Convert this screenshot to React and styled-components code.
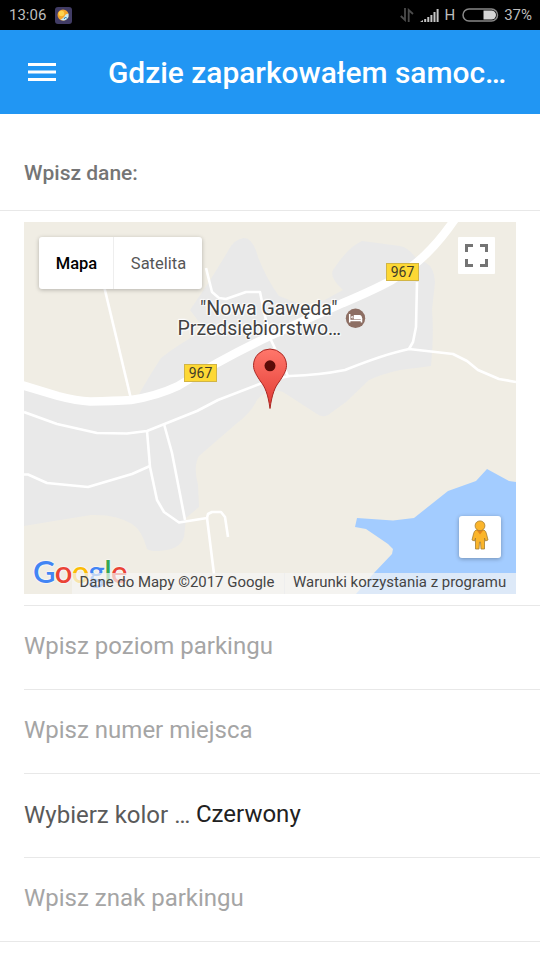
import React from "react";
import styled, { createGlobalStyle } from "styled-components";

const GlobalStyle = createGlobalStyle`
  * { box-sizing: border-box; }
  body { margin: 0; background: #fff; font-family: Roboto, "Noto Sans", sans-serif; }
`;

const Screen = styled.main`
  display: flex;
  flex-direction: column;
  width: 540px;
  height: 960px;
  overflow: hidden;
  background: #fff;
`;

const StatusBar = styled.header`
  display: flex;
  align-items: center;
  justify-content: space-between;
  height: 30px;
  padding: 0 9px;
  background: #000;
  color: #bdbdbd;
  font-size: 15px;
  line-height: 30px;
`;

const StatusGroup = styled.div`
  display: flex;
  align-items: center;
  gap: ${(p) => p.$gap}px;
`;

const SystemIcons = styled(StatusGroup)`
  margin-right: -1px;
`;

const AppBar = styled.nav`
  display: flex;
  align-items: center;
  height: 84px;
  padding-left: 27px;
  background: #2196f3;
`;

const MenuButton = styled.button`
  display: flex;
  width: 81px;
  padding: 0;
  border: 0;
  background: none;
`;

const Title = styled.h1`
  width: 408px;
  margin: 0;
  padding-top: 1px;
  overflow: hidden;
  color: #fff;
  font-size: 29.9px;
  font-weight: 500;
  line-height: 40px;
  white-space: nowrap;
`;

const SectionHeader = styled.h2`
  height: 97px;
  margin: 0;
  padding: 44px 24px 0;
  border-bottom: 1px solid #e8e8e8;
  color: #757575;
  font-size: 21px;
  font-weight: 500;
  line-height: 30px;
`;

const MapFrame = styled.section`
  position: relative;
  flex: none;
  width: 492px;
  height: 372px;
  margin: 11px 24px;
  overflow: hidden;
  background: #f0ede4;
`;

const Canvas = styled.svg`
  display: block;
`;

const MapTypes = styled.div`
  position: absolute;
  left: 15px;
  top: 15px;
  display: flex;
  height: 52px;
  border-radius: 3px;
  background: #fff;
  box-shadow: 0 1px 4px rgba(0, 0, 0, 0.25);
`;

const MapType = styled.button`
  width: ${(p) => p.$width}px;
  padding: 0 0 0 1px;
  border: 0;
  border-left: ${(p) => (p.$active ? "0" : "1px solid #eee")};
  background: none;
  color: ${(p) => (p.$active ? "#000" : "#565656")};
  font: ${(p) => (p.$active ? 500 : 400)} 16.5px Roboto, sans-serif;
`;

const MapButton = styled.button`
  position: absolute;
  left: ${(p) => p.$x}px;
  top: ${(p) => p.$y}px;
  display: grid;
  place-items: center;
  width: ${(p) => p.$size}px;
  height: ${(p) => p.$size}px;
  padding: 0;
  border: 0;
  border-radius: ${(p) => (p.$raised ? 3 : 1)}px;
  background: #fff;
  box-shadow: ${(p) => (p.$raised ? "0 1px 4px rgba(0, 0, 0, 0.3)" : "none")};
`;

const RoadShield = styled.span`
  position: absolute;
  left: ${(p) => p.$x}px;
  top: ${(p) => p.$y}px;
  width: 33px;
  height: 18px;
  border: 1px solid #d2b545;
  background: #fdd835;
  color: #423c28;
  font-size: 14px;
  line-height: 17px;
  text-align: center;
`;

const PlaceLabel = styled.div`
  position: absolute;
  left: 153.5px;
  top: 77px;
  color: #424242;
  font-size: 19.5px;
  line-height: 19.5px;
  white-space: nowrap;
  text-shadow: 0 0 2px #fff, 0 0 2px #fff, 0 0 3px #fff, 1px 1px 1px #fff, -1px -1px 1px #fff;
`;

const LabelLine = styled.div`
  padding-left: ${(p) => p.$inset || 0}px;
`;

const Logo = styled.div`
  position: absolute;
  left: 9px;
  top: 331px;
  font-family: Lato, sans-serif;
  font-size: 31px;
  font-weight: 600;
  letter-spacing: -0.7px;
  line-height: 36px;
  text-shadow: 0 0 2px #fff, 0 0 2px #fff;
`;

const Letter = styled.span`
  color: ${(p) => p.$color};
`;

const Attribution = styled.footer`
  position: absolute;
  right: 0;
  bottom: 0;
  display: flex;
  height: 21px;
  color: #444;
  font-size: 14.95px;
  line-height: 18px;
  white-space: nowrap;
`;

const Credit = styled.span`
  width: ${(p) => p.$width}px;
  padding-left: ${(p) => (p.$divided ? 8 : 7.5)}px;
  background: rgba(245, 245, 245, 0.7);
  border-left: ${(p) => (p.$divided ? "1px solid #eee" : "0")};
`;

const Fields = styled.ul`
  margin: 0 0 0 ${(p) => p.$inset}px;
  padding: 0;
  list-style: none;
  border-top: 1px solid #e8e8e8;
`;

const Field = styled.li`
  display: flex;
  height: 84px;
  padding: 24px 0 0;
  border-bottom: 1px solid #e8e8e8;
  color: ${(p) => (p.$filled ? "#5a5a5a" : "#a5a5a5")};
  font-size: 24px;
  line-height: 32px;
  white-space: nowrap;
`;

const LastField = styled(Field)`
  margin-left: -24px;
  padding-left: 24px;
`;

const Caption = styled.span`
  width: 172px;
  padding-top: 1px;
`;

const Value = styled.span`
  color: #212121;
`;

const minorRoads = [
  "M104 286L131 399",
  "M206 268L212 292L219 298L226 299L246 292L260 292L264 312L271 340L288 376",
  "M516 382L499 379L478 370L467 361L453 354L409 349Q385 354 345 370Q320 375 290 376L270 380L218 400L197 411L147 431L127 433.500L97 433L57 424L24 412",
  "M409 349L413 342L416 327L417 282",
  "M147 431L150 467L157 500L164 512L179 522.500L207 518L208 514L212 512L221 512L225 517L228 537",
  "M164 424L172 453L185 520",
  "M207 518L214 574",
  "M150 466L132 474L88 487L47 483L28 474.500L24 474.500",
];

const logo = [["G", "#4285f4"], ["o", "#ea4335"], ["o", "#fbbc05"], ["g", "#4285f4"], ["l", "#34a853"], ["e", "#ea4335"]];

function MapDrawing() {
  return (
    <Canvas width="492" height="372" viewBox="24 222 492 372">
      <defs>
        <linearGradient id="pin" x1="0" y1="0" x2="0" y2="1">
          <stop offset="0" stopColor="#ff776b" />
          <stop offset="1" stopColor="#e23a33" />
        </linearGradient>
      </defs>
      <path fill="#e9e9e9" d="M24 386L90 402L138 396Q148 378 161 358Q180 343 205 330L190 310Q210 282 228 251Q234 239 244 238Q253 238 258 257Q267 280 279 296L310 308L343 290Q329 277 333 270Q348 247 362 241L400 246Q409 248 415 257L426 263Q434 267 435 282L432 310Q434 333 431 366L400 370Q382 374 369 380L346 402L328 415Q323 418 317 414L283 392Q268 387 257 400Q251 413 236 424L199 456Q193 466 198 485L199 507L186 518L184 537Q181 546 171 549Q153 553 147 549Q142 530 132 524Q116 514 91 515L54 521L24 526Z" />
      <path fill="#a3ccff" d="M357 518L393 520.500L414 518L448 491L476 481L487 469L509 481L516 482V594H356L374 573L392 554L393 549L388 544L366 529L355 527Z" />
      <g fill="none" stroke="#fff" strokeWidth="2.600" strokeLinejoin="round">
        {minorRoads.map((d) => <path key={d} d={d} />)}
      </g>
      <path fill="none" stroke="#fff" strokeWidth="8.500" d="M20 384.500L58 396Q77 401 90 401.500Q115 401 131 400Q157 396 178 386Q223 358 270 336L343 303Q376 289 392 280Q414 266 424 256Q440 241 455 219" />
      <circle cx="355.500" cy="318.300" r="9.700" fill="#8d6e63" />
      <g fill="none" stroke="#fff" strokeWidth="1.500">
        <path d="M349.700 314V322.500M349.700 320.500H362M361.500 322.500V318" />
        <path d="M354.500 318.500V315.800H359.500Q361.300 316 361.300 318.500Z" fill="#fff" />
        <circle cx="352.200" cy="317.200" r=".8" strokeWidth="1" />
      </g>
      <path fill="url(#pin)" stroke="#a92823" strokeWidth="1" d="M270 408.500C268 394 265 387 261 382C257 376 253.500 371 253.500 365.500A16.500 16.500 0 0 1 286.500 365.500C286.500 371 283 376 279 382C275 387 272 394 270 408.500Z" />
      <circle cx="270" cy="365.800" r="5.500" fill="#5b0c08" />
    </Canvas>
  );
}

export default function App() {
  return (
    <Screen>
      <GlobalStyle />
      <StatusBar>
        <StatusGroup $gap={9}>
          <span>13:06</span>
          <svg width="17" height="17" viewBox="0 0 17 17">
            <rect width="17" height="17" rx="3" fill="#413c65" />
            <circle cx="8" cy="8" r="5.500" fill="#f4a52b" />
            <circle cx="6.500" cy="6.500" r="2.800" fill="#ffd34e" />
            <path d="M13.500 6.500Q10 7 9.500 9.500Q8 11.500 5.500 12.800Q11 15 13.500 10Z" fill="#c8e8f4" />
            <path d="M9 12L10.500 10L12 11.500" fill="none" stroke="#2577a4" />
          </svg>
        </StatusGroup>
        <SystemIcons $gap={5}>
          <svg width="14" height="14" viewBox="0 0 14 14" fill="none" stroke="#4c4c4c" strokeWidth="1.800">
            <path d="M5 0V12L.8 8M8.700 14V2L13 6" />
          </svg>
          <svg width="20" height="13" viewBox="-1 0 20 13" fill="#c5c5c5">
            <path d="M0 13L3 11V13ZM4.200 10H6.200V13H4.200ZM7.300 8H9.300V13H7.300ZM10.400 6H12.400V13H10.400ZM13.500 3H15.500V13H13.500ZM16.600 0H18.600V13H16.600Z" />
          </svg>
          <span>H</span>
          <svg width="39" height="14" viewBox="-2 0 39 14">
            <rect x="1" y="1" width="34.500" height="12" rx="6" fill="none" stroke="#888" strokeWidth="1.500" />
            <path d="M21.500 2.500H29.500A4.500 4.500 0 0 1 29.500 11.500H21.500Z" fill="#d5d5d5" />
          </svg>
          <span>37%</span>
        </SystemIcons>
      </StatusBar>
      <AppBar>
        <MenuButton aria-label="Menu">
          <svg width="30" height="20" viewBox="0 0 30 20" fill="#fff">
            <path d="M1 1H29V4H1ZM1 8.500H29V11.500H1ZM1 16H29V19H1Z" />
          </svg>
        </MenuButton>
        <Title>Gdzie zaparkowałem samoc…</Title>
      </AppBar>
      <SectionHeader>Wpisz dane:</SectionHeader>
      <MapFrame>
        <MapDrawing />
        <RoadShield $x={362} $y={41}>967</RoadShield>
        <RoadShield $x={160} $y={142}>967</RoadShield>
        <PlaceLabel>
          <LabelLine $inset={22.5}>"Nowa Gawęda"</LabelLine>
          <LabelLine>Przedsiębiorstwo…</LabelLine>
        </PlaceLabel>
        <MapTypes>
          <MapType $width={74} $active>Mapa</MapType>
          <MapType $width={89}>Satelita</MapType>
        </MapTypes>
        <MapButton $x={434} $y={15} $size={37} aria-label="Pełny ekran">
          <svg width="23" height="23" viewBox="0 0 23 23" fill="none" stroke="#747474" strokeWidth="3">
            <path d="M1.500 8V1.500H8M15 1.500H21.500V8M21.500 15V21.500H15M8 21.500H1.500V15" />
          </svg>
        </MapButton>
        <MapButton $x={435} $y={294} $size={42} $raised aria-label="Street View">
          <svg width="18" height="34" viewBox="0 0 18 34" fill="#fbb52b" stroke="#a47d32" strokeWidth=".8">
            <path d="M5 10H13Q15 11 15.500 14L17 20L14.500 21L13.500 18V29H10L9.500 22H8.500L8 29H4.500V18L3.500 21L1 20L2.500 14Q3 11 5 10Z" />
            <path d="M5.500 10H12.500L9 14.500Z" fill="#e4841c" stroke="none" />
            <circle cx="9" cy="5.800" r="4.900" />
          </svg>
        </MapButton>
        <Logo>{logo.map(([c, color], i) => <Letter key={i} $color={color}>{c}</Letter>)}</Logo>
        <Attribution>
          <Credit $width={212}>Dane do Mapy ©2017 Google</Credit>
          <Credit $width={232} $divided>Warunki korzystania z programu</Credit>
        </Attribution>
      </MapFrame>
      <Fields $inset={24}>
        <Field>Wpisz poziom parkingu</Field>
        <Field>Wpisz numer miejsca</Field>
        <Field $filled>
          <Caption>Wybierz kolor …</Caption>
          <Value>Czerwony</Value>
        </Field>
        <LastField>Wpisz znak parkingu</LastField>
      </Fields>
    </Screen>
  );
}
